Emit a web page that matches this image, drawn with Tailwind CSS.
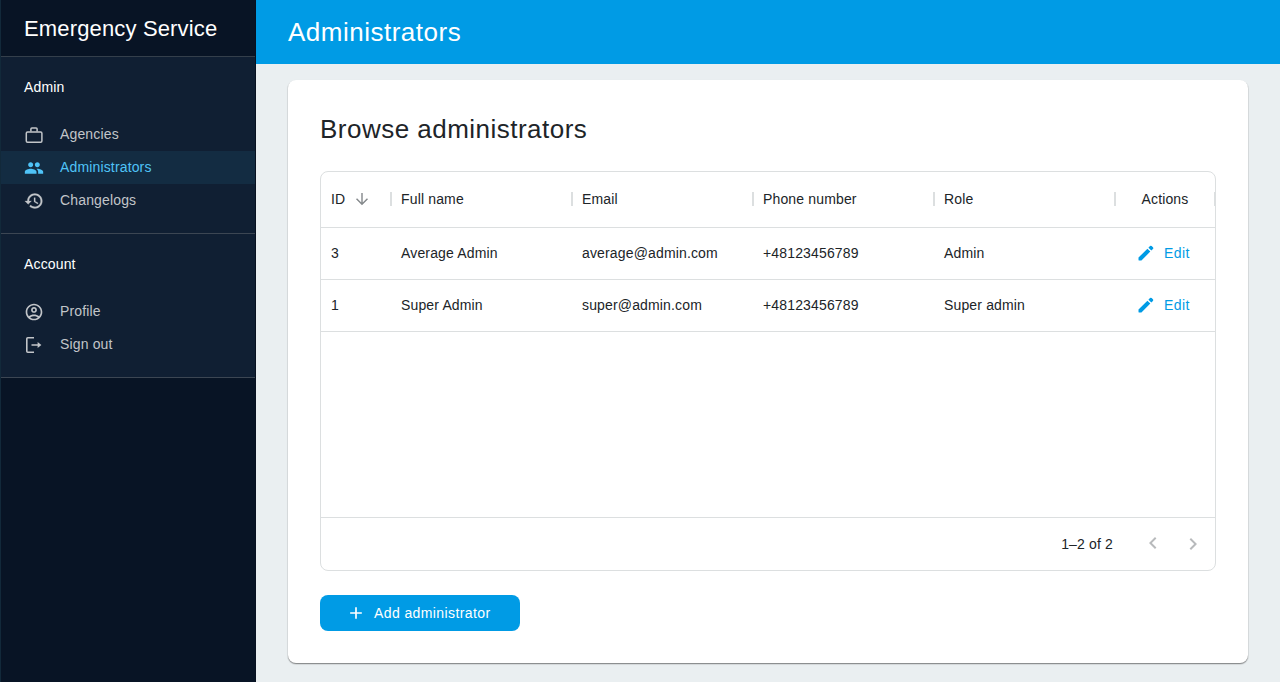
<!DOCTYPE html>
<html lang="en">
<head>
<meta charset="utf-8">
<title>Administrators</title>
<script src="https://cdn.jsdelivr.net/npm/@tailwindcss/browser@4"></script>
</head>
<body class="flex h-[682px] w-[1280px] overflow-hidden bg-[#eaeff1] font-['Liberation_Sans',Arial,sans-serif] text-sm tracking-[0.15px] text-[#202428]">
<aside class="flex w-64 shrink-0 flex-col border-x border-l-[#12293a] border-r-[#081120] bg-[#081425] text-[#c2c5c9]">
  <div class="flex h-14 items-center pt-0.5 pl-[23px] text-[22px] text-white">Emergency Service</div>
  <section class="h-[177px] border-t border-[#343f4b] bg-[#101f33]">
    <h2 class="flex h-[61px] items-center pb-0.5 pl-[23px] text-white">Admin</h2>
    <nav>
      <a class="flex h-[33px] items-center gap-4 pb-0.5 pl-[23px]"><svg class="mt-0.5 size-5" viewBox="0 0 20 20" fill="none" stroke="currentColor" stroke-width="1.5"><rect x="2.300" y="7" width="15.600" height="10.300" rx="1.200"/><path d="M6.900 6.500V4q0-1 1-1h4.200q1 0 1 1v2.500"/></svg>Agencies</a>
      <a class="flex h-[33px] items-center gap-4 bg-[#132c42] pb-0.5 pl-[23px] text-[#4fc3f7]"><svg class="mt-0.5 size-5" viewBox="0 0 24 24" fill="currentColor"><path d="M16 11c1.66 0 2.99-1.34 2.99-3S17.66 5 16 5c-1.66 0-3 1.34-3 3s1.34 3 3 3zm-8 0c1.66 0 2.99-1.34 2.99-3S9.66 5 8 5C6.34 5 5 6.34 5 8s1.34 3 3 3zm0 2c-2.33 0-7 1.17-7 3.5V19h14v-2.5c0-2.33-4.67-3.5-7-3.5zm8 0c-.29 0-.62.02-.97.05 1.16.84 1.97 1.97 1.97 3.45V19h6v-2.5c0-2.33-4.67-3.5-7-3.5z"/></svg>Administrators</a>
      <a class="flex h-[33px] items-center gap-4 pb-0.5 pl-[23px]"><svg class="mt-0.5 size-5" viewBox="0 0 24 24" fill="currentColor" stroke="currentColor" stroke-width=".3"><path d="M13 3c-4.97 0-9 4.03-9 9H1l3.89 3.89.07.14L9 12H6c0-3.87 3.13-7 7-7s7 3.13 7 7-3.13 7-7 7c-1.93 0-3.68-.79-4.94-2.06l-1.42 1.42C8.27 19.99 10.51 21 13 21c4.97 0 9-4.03 9-9s-4.03-9-9-9zm-1 5v5l4.28 2.54.72-1.21-3.5-2.08V8H12z"/></svg>Changelogs</a>
    </nav>
  </section>
  <section class="h-[145px] border-y border-[#3c4653] bg-[#101f33]">
    <h2 class="flex h-[61px] items-center pb-0.5 pl-[23px] text-white">Account</h2>
    <nav>
      <a class="flex h-[33px] items-center gap-4 pb-0.5 pl-[23px]"><svg class="mt-0.5 size-5" viewBox="0 0 24 24" fill="currentColor"><path d="M12 2C6.48 2 2 6.48 2 12s4.48 10 10 10 10-4.48 10-10S17.52 2 12 2zM7.35 18.5C8.66 17.56 10.26 17 12 17s3.34.56 4.65 1.5c-1.31.94-2.91 1.5-4.65 1.5s-3.34-.56-4.65-1.5zm10.79-1.38C16.45 15.8 14.32 15 12 15s-4.45.8-6.14 2.12C4.7 15.73 4 13.95 4 12c0-4.42 3.58-8 8-8s8 3.58 8 8c0 1.95-.7 3.73-1.86 5.12zM12 6c-1.93 0-3.5 1.57-3.5 3.5S10.07 13 12 13s3.5-1.57 3.5-3.5S13.93 6 12 6zm0 5c-.83 0-1.5-.67-1.5-1.5S11.17 8 12 8s1.5.67 1.5 1.5S12.83 11 12 11z"/></svg>Profile</a>
      <a class="flex h-[33px] items-center gap-4 pb-0.5 pl-[23px]"><svg class="mt-0.5 size-5" viewBox="0 0 20 20" fill="none" stroke="currentColor" stroke-width="1.600"><path d="M10 2.800H3.800q-1 0-1 1v12.400q0 1 1 1H10M7.500 10H15"/><path fill="currentColor" stroke="none" d="M13.600 6.900L17.400 10l-3.800 3.100z"/></svg>Sign out</a>
    </nav>
  </section>
</aside>
<div class="flex grow flex-col">
  <header class="flex h-16 shrink-0 items-center bg-[#009be5] pt-0.5 pl-8 text-[26px] tracking-[0.5px] text-white">Administrators</header>
  <main class="px-8 pt-4">
    <div class="h-[583px] rounded-lg bg-white px-8 pt-8 shadow-[0_1px_1px_rgba(0,0,0,0.4),0_1px_1px_1px_rgba(0,0,0,0.06)]">
      <h1 class="h-[59px] text-[26px] leading-[34px] tracking-[0.48px]">Browse administrators</h1>
      <div class="flex h-[400px] flex-col overflow-hidden rounded-lg border border-[#dcdfe0]">
        <div class="grid h-14 shrink-0 grid-cols-[70px_181px_181px_181px_181px_100px] items-center border-b border-[#dcdfe0] pb-0.5">
          <div class="flex items-center pl-2.5">ID<svg class="ml-2 size-[18px]" viewBox="0 0 24 24" fill="none" stroke="#85898c" stroke-width="1.900"><path d="M12 4v15M4.700 11.700L12 19l7.300-7.300"/></svg><i class="-mr-px ml-auto h-3.5 w-0.5 bg-[#dcdfe0]"></i></div>
          <div class="flex items-center pl-2.5">Full name<i class="-mr-px ml-auto h-3.5 w-0.5 bg-[#dcdfe0]"></i></div>
          <div class="flex items-center pl-2.5">Email<i class="-mr-px ml-auto h-3.5 w-0.5 bg-[#dcdfe0]"></i></div>
          <div class="flex items-center pl-2.5">Phone number<i class="-mr-px ml-auto h-3.5 w-0.5 bg-[#dcdfe0]"></i></div>
          <div class="flex items-center pl-2.5">Role<i class="-mr-px ml-auto h-3.5 w-0.5 bg-[#dcdfe0]"></i></div>
          <div class="flex items-center pl-[26.5px]">Actions<i class="-mr-px ml-auto h-3.5 w-0.5 bg-[#dcdfe0]"></i></div>
        </div>
        <div class="grid h-[52px] shrink-0 grid-cols-[70px_181px_181px_181px_181px_100px] items-center border-b border-[#dcdfe0] pb-0.5">
          <div class="pl-2.5">3</div><div class="pl-2.5">Average Admin</div><div class="pl-2.5">average@admin.com</div><div class="pl-2.5">+48123456789</div><div class="pl-2.5">Admin</div>
          <div class="flex items-center gap-2 pl-[21px] tracking-[0.4px] text-[#009be5]"><svg class="size-5" viewBox="0 0 24 24" fill="currentColor"><path d="M3 17.500L13.700 6.800l3.500 3.500L6.500 21H4q-1 0-1-1zM14.900 5.600l1.900-1.900q1-1 2 0l1.500 1.500q1 1 0 2l-1.900 1.900z"/></svg>Edit</div>
        </div>
        <div class="grid h-[52px] shrink-0 grid-cols-[70px_181px_181px_181px_181px_100px] items-center border-b border-[#dcdfe0] pb-0.5">
          <div class="pl-2.5">1</div><div class="pl-2.5">Super Admin</div><div class="pl-2.5">super@admin.com</div><div class="pl-2.5">+48123456789</div><div class="pl-2.5">Super admin</div>
          <div class="flex items-center gap-2 pl-[21px] tracking-[0.4px] text-[#009be5]"><svg class="size-5" viewBox="0 0 24 24" fill="currentColor"><path d="M3 17.500L13.700 6.800l3.500 3.500L6.500 21H4q-1 0-1-1zM14.900 5.600l1.900-1.900q1-1 2 0l1.500 1.500q1 1 0 2l-1.900 1.900z"/></svg>Edit</div>
        </div>
        <div class="mt-auto flex h-[53px] items-center justify-end border-t border-[#dcdfe0] pr-2.5">
          <span class="mr-7">1–2 of 2</span>
          <svg class="mr-4 mb-0.5 size-6" viewBox="0 0 24 24" fill="#b8babc"><path d="M15.410 7.410L14 6l-6 6 6 6 1.410-1.410L10.830 12z"/></svg>
          <svg class="size-6" viewBox="0 0 24 24" fill="#b8babc"><path d="M10 6L8.590 7.410 13.170 12l-4.580 4.590L10 18l6-6z"/></svg>
        </div>
      </div>
      <button class="mt-6 flex h-9 w-[200px] items-center gap-2 rounded-lg bg-[#009be5] pl-[26px] tracking-[0.4px] text-white"><svg class="size-5" viewBox="0 0 24 24" fill="currentColor"><path d="M19 13h-6v6h-2v-6H5v-2h6V5h2v6h6v2z"/></svg>Add administrator</button>
    </div>
  </main>
</div>
</body>
</html>
